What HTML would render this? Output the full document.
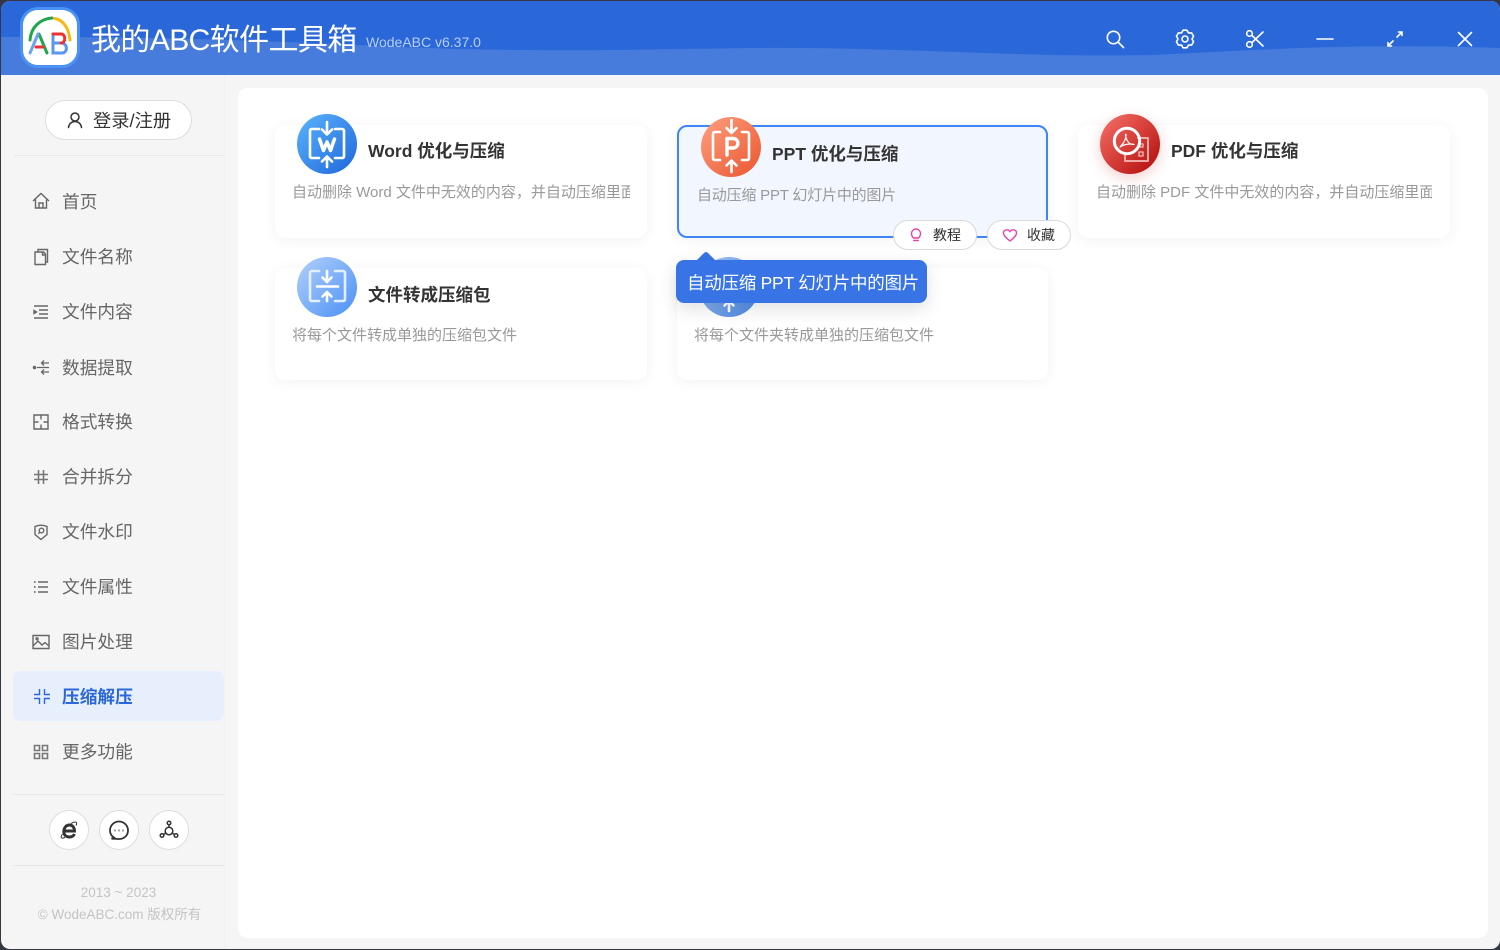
<!DOCTYPE html>
<html lang="zh-CN"><head><meta charset="utf-8"><title>我的ABC软件工具箱</title>
<style>
*{box-sizing:border-box}
html,body{margin:0;width:1500px;height:950px;overflow:hidden;background:#333844}
body{position:relative;font-family:"Liberation Sans","Noto Sans CJK SC",sans-serif}
.abs,.nav,.card,.ic,.t,.d{position:absolute}
#win{position:absolute;left:1px;top:1px;width:1499px;height:948px;border-radius:9px;background:#f5f5f5;overflow:hidden}
#bar{position:absolute;left:-1px;top:-1px;width:1500px;height:75px}
.nav{left:62px;font-size:17.7px;line-height:26px;height:26px;color:#666;white-space:nowrap}
.ni{position:absolute;left:32px;width:18px;height:18px;fill:none;stroke:#666;stroke-width:1.4}
.card{background:#fff;border-radius:10px;box-shadow:0 2px 14px rgba(0,0,0,.055)}
.t{font-size:17.5px;font-weight:700;color:#333;line-height:26px;white-space:nowrap}
.d{font-size:15px;color:#999;line-height:20px;white-space:nowrap;overflow:hidden}
.ic{width:60px;height:60px;border-radius:50%}
.ic svg{position:absolute;left:0;top:0;width:60px;height:60px;fill:none;stroke:#fff;stroke-width:2.6;stroke-linecap:round;stroke-linejoin:round}
.tb{position:absolute;top:28px;width:20px;height:20px;fill:none;stroke:#fff;stroke-width:1.6;stroke-linecap:round;stroke-linejoin:round}
.hr{position:absolute;left:13px;width:211px;height:1px;background:#e8e8e8}
.cb{position:absolute;top:810px;width:40px;height:40px;border-radius:50%;background:#fff;border:1px solid #ddd}
.cb svg{position:absolute;left:9px;top:9px;width:20px;height:20px;fill:none;stroke:#333;stroke-width:1.8}
.pill{position:absolute;top:220px;height:30px;width:84px;border-radius:15px;background:#fff;border:1px solid #d9d9d9;font-size:14px;line-height:29px;color:#333}
.pill svg{position:absolute;left:14px;top:6px;width:16px;height:16px;fill:none;stroke:#ee3fa5;stroke-width:1.4;stroke-linecap:round;stroke-linejoin:round}
.pill span{position:absolute;left:39px;top:0;white-space:nowrap}
</style></head><body>
<div id="win">
<svg id="bar" viewBox="0 0 1500 75"><rect width="1500" height="75" fill="#2a67d8"/><path d="M0 37C120 36 260 40 400 47C560 53 640 49 760 48C900 47 1030 58 1150 55C1260 50 1350 43 1500 48V75H0Z" fill="#477cdc"/></svg>

<div class="abs" style="left:19px;top:6px;width:60px;height:61px;border-radius:18px;background:#fff;border:3px solid #4a92f5"></div>
<svg class="abs" style="left:19px;top:6px;width:60px;height:61px" viewBox="0 0 60 61" fill="none" stroke-linecap="round" stroke-width="3">
<path d="M10 33C11 20 20 12 32 11" stroke="#1fa64b"/><path d="M35 11.5C43 13 49 21 50 33" stroke="#f7b90f"/>
<path d="M19 27L27 46" stroke="#1fa64b"/><path d="M10 46L18 27" stroke="#6aa3f2"/><path d="M16 40H23" stroke="#ef3030"/><path d="M33 27V46H42C48 46 48 36 41 36H33" stroke="#5a97ef"/><path d="M33 27H41C46 27 46 36 41 36" stroke="#ef3030"/>
</svg>
<div class="abs" style="left:90px;top:19px;font-size:30px;line-height:42px;color:#fff;white-space:nowrap;letter-spacing:-.6px">我的ABC软件工具箱</div>
<div class="abs" style="left:365px;top:30px;font-size:14px;line-height:22px;color:#b9cdf2;white-space:nowrap">WodeABC v6.37.0</div>

<svg class="tb" style="left:1104px" viewBox="0 0 20 20"><circle cx="8.5" cy="8.5" r="6.2"/><path d="M13 13L18.5 18.5"/></svg>
<svg class="tb" style="left:1174px" viewBox="0 0 20 20"><path d="M8.13 1.2H11.87L13.5 3.94L16.69 3.98L18.56 7.22L17 10L18.56 12.78L16.69 16.02L13.5 16.06L11.87 18.8H8.13L6.5 16.06L3.31 16.02L1.44 12.78L3 10L1.44 7.22L3.31 3.98L6.5 3.94Z"/><circle cx="10" cy="10" r="3"/></svg>
<svg class="tb" style="left:1244px" viewBox="0 0 20 20"><circle cx="4.5" cy="4.5" r="2.8"/><circle cx="4.5" cy="15.5" r="2.8"/><path d="M7 6.5L18 17M7 13.5L18 3"/></svg>
<svg class="tb" style="left:1314px" viewBox="0 0 20 20"><path d="M2 10H18"/></svg>
<svg class="tb" style="left:1384px" viewBox="0 0 20 20"><path d="M3 17L8 12M12 8L17 3M13.5 3H17V6.500M3 13.500V17H6.500"/></svg>
<svg class="tb" style="left:1454px" viewBox="0 0 20 20"><path d="M3.500 3.500L16.500 16.500M16.500 3.500L3.500 16.500"/></svg>

<div class="abs" style="left:44px;top:99px;width:147px;height:40px;border-radius:20px;background:#fff;border:1px solid #ddd"></div>
<svg class="abs" style="left:65px;top:110px;width:18px;height:18px;fill:none;stroke:#333;stroke-width:1.5;stroke-linecap:round" viewBox="0 0 18 18"><circle cx="9" cy="6" r="4"/><path d="M2.500 16.500C3 12.500 6 10.500 9 10.500S15 12.500 15.500 16.500"/></svg>
<div class="abs" style="left:92px;top:107px;font-size:18.300px;line-height:26px;color:#333;white-space:nowrap">登录/注册</div>
<div class="hr" style="top:154px"></div>

<div class="abs" style="left:12px;top:670px;width:211px;height:50px;border-radius:8px;background:#e8effc"></div>
<div class="abs" style="left:223px;top:74px;width:1px;height:874px;background:#f1f1f1"></div>

<div class="abs" style="left:-1px;top:-1px;width:1500px;height:950px">
<svg class="ni" style="top:192px" viewBox="0 0 18 18"><path d="M1 9L9 1.500L17 9M3.500 7.500V16H14.500V7.500M7 16V11H11V16"/></svg>
<div class="nav" style="top:189px">首页</div>
<svg class="ni" style="top:248px" viewBox="0 0 18 18"><path d="M3 4H11.500L13.500 6V16.500H3ZM6 4V1.500H15.500V14H13.500M10.500 4V7H13.500"/></svg>
<div class="nav" style="top:244px">文件名称</div>
<svg class="ni" style="top:303px" viewBox="0 0 18 18"><path d="M2 3H16M7 7H16M7 11H16M2 15H16"/><path d="M2 7.500L4.500 9L2 10.500Z" fill="#666"/></svg>
<div class="nav" style="top:299px">文件内容</div>
<svg class="ni" style="top:358px" viewBox="0 0 18 18"><path d="M5 9.500H17M17 5H9.500M12 2.500L9.500 5L12 7.500M17 14H9.500M12 11.500L9.500 14L12 16.500" stroke-width="1.300"/><circle cx="2.500" cy="9.500" r="1.100" fill="#666"/></svg>
<div class="nav" style="top:355px">数据提取</div>
<svg class="ni" style="top:413px" viewBox="0 0 18 18"><path d="M2 2H16V16H2ZM2 9H6.500M11.500 9H16M9 2V6.500M9 11.500V16"/></svg>
<div class="nav" style="top:409px">格式转换</div>
<svg class="ni" style="top:468px;stroke-width:1.600;stroke:#777" viewBox="0 0 18 18"><path d="M6.500 2V16M11.500 2V16M2 6.500H16M2 11.500H16"/></svg>
<div class="nav" style="top:464px">合并拆分</div>
<svg class="ni" style="top:523px" viewBox="0 0 18 18"><path d="M3 3.500Q9 .8 15 3.500V11.500L9 16.500L3 11.500Z"/><circle cx="9.500" cy="7.500" r="2.300"/><path d="M7.800 9.300L6.300 10.800"/></svg>
<div class="nav" style="top:519px">文件水印</div>
<svg class="ni" style="top:578px" viewBox="0 0 18 18"><path d="M6 4H16M6 9H16M6 14H16"/><path d="M2 4H3.500M2 9H3.500M2 14H3.500" stroke-width="1.800"/></svg>
<div class="nav" style="top:574px">文件属性</div>
<svg class="ni" style="top:633px" viewBox="0 0 18 18"><path d="M1 2.500H17V15.500H1ZM1 13L6 8L10 12L13 9.500L17 13"/><circle cx="5" cy="5.800" r="1"/></svg>
<div class="nav" style="top:629px">图片处理</div>
<svg class="ni" style="top:687px;left:33px;stroke:#2a67d8;stroke-width:1.400" viewBox="0 0 18 18"><path d="M6.500 2V7.500H1M11.500 2V7.500H17M6.500 17V11.500H1M11.500 17V11.500H17"/></svg>
<div class="nav" style="top:684px;color:#2a67d8;font-weight:700">压缩解压</div>
<svg class="ni" style="top:743px;stroke-width:1.600;stroke:#777" viewBox="0 0 18 18"><path d="M2.500 2.500H7.500V7.500H2.500ZM10.500 2.500H15.500V7.500H10.500ZM2.500 10.500H7.500V15.500H2.500ZM10.500 10.500H15.500V15.500H10.500Z"/></svg>
<div class="nav" style="top:739px">更多功能</div>

<div class="hr" style="top:794px"></div>
<div class="cb" style="left:49px"><svg viewBox="0 0 20 20" style="stroke-width:2.900"><path d="M5 11H15.500C15.500 7 13 5 10.500 5C7 5 4.800 8 4.800 11.500C4.800 15 7 17 10.500 17C12.500 17 14.500 16 15.500 14"/><path d="M3.500 14C1 17.500 2 19 6 17.500M12 3.500C16 1 19 1.500 17 5.500" stroke-width="1"/></svg></div>
<div class="cb" style="left:99px"><svg viewBox="0 0 20 20"><path d="M5 17.500C2.500 16 1 13.500 1 10.500C1 5.500 5 1.500 10 1.500S19 5.500 19 10.500S15 19 10 19C8 19 6 18.700 2.500 18.700Z"/><path d="M5.500 10.500H6.500M9.500 10.500H10.500M13.500 10.500H14.500" stroke-width="1.800"/></svg></div>
<div class="cb" style="left:149px"><svg viewBox="0 0 20 20" style="stroke-width:1.500"><circle cx="10" cy="3" r="1.800"/><circle cx="3" cy="15.500" r="1.800"/><circle cx="17" cy="15.500" r="1.800"/><circle cx="10" cy="11" r="3.800"/><path d="M10 5V7.200M4.600 14.500L6.700 13M15.400 14.500L13.300 13"/></svg></div>
<div class="hr" style="top:865px"></div>
<div class="abs" style="left:13px;top:883px;width:211px;text-align:center;font-size:13.500px;line-height:20px;color:#c4c4c4">2013 ~ 2023</div>
<div class="abs" style="left:14px;top:905px;width:211px;text-align:center;font-size:13.500px;line-height:20px;color:#c4c4c4;white-space:nowrap">© WodeABC.com 版权所有</div>

<div class="abs" style="left:238px;top:88px;width:1250px;height:850px;background:#fff;border-radius:10px"></div>

<div class="card" style="left:275px;top:125px;width:372px;height:113px"></div>
<div class="card" style="left:677px;top:125px;width:371px;height:113px;background:#f2f6fe;border:2px solid #3f85f5"></div>
<div class="card" style="left:1078px;top:125px;width:372px;height:113px"></div>
<div class="card" style="left:275px;top:268px;width:372px;height:112px"></div>
<div class="card" style="left:677px;top:268px;width:371px;height:112px"></div>

<div class="ic" style="left:297px;top:114px;background:linear-gradient(135deg,#5ab4fb,#1f66dc)"><svg viewBox="0 0 60 60"><path d="M22 15H15Q13 15 13 17V42Q13 44 15 44H22M38 15H45Q47 15 47 17V42Q47 44 45 44H38M30 8V20M25 15.500L30 20.500L35 15.500M30 43V53M25 47.500L30 42.500L35 47.500"/><path d="M22.500 25L26.500 36.500L30 28L33.500 36.500L37.500 25" stroke-width="3.500"/></svg></div>
<div class="t" style="left:368px;top:138px">Word 优化与压缩</div>
<div class="d" style="left:292px;top:183px;width:338px">自动删除 Word 文件中无效的内容，并自动压缩里面的图片</div>

<div class="ic" style="left:701px;top:117px;background:linear-gradient(135deg,#ff9f80,#e9562e)"><svg viewBox="0 0 60 60"><path d="M19 15H14Q12 15 12 17V41Q12 43 14 43H19M41 15H46Q48 15 48 17V41Q48 43 46 43H41M30.500 3V15.500M25.500 11L30.500 16L35.500 11M30.500 44V55M25.500 48.500L30.500 43.500L35.500 48.500"/><path d="M26 38V21.500H32C38.500 21.500 38.500 31 32 31H26" stroke-width="3.400"/></svg></div>
<div class="t" style="left:772px;top:141px">PPT 优化与压缩</div>
<div class="d" style="left:697px;top:186px;width:330px;letter-spacing:-.2px">自动压缩 PPT 幻灯片中的图片</div>

<div class="ic" style="left:1100px;top:114px;background:linear-gradient(135deg,#f9716a,#b00a08);box-shadow:0 4px 14px rgba(200,40,30,.22)"><svg viewBox="0 0 60 60"><path d="M38 24H48V47H25V41" stroke="#efaaa6" stroke-width="2"/><path d="M39 38H43V42H39ZM40 30H43V33H40Z" stroke="#efaaa6" stroke-width="1.500"/><circle cx="27" cy="27" r="12.700" stroke-width="3"/><path d="M20 33C23 30 26 26 26 21C26 19 24.500 21 27 26C29 30 31 30.500 34 30.500C31 29.500 24 30 20 33Z" stroke-width="1.200"/></svg></div>
<div class="t" style="left:1171px;top:138px">PDF 优化与压缩</div>
<div class="d" style="left:1096px;top:183px;width:336px">自动删除 PDF 文件中无效的内容，并自动压缩里面的图片</div>

<div class="ic" style="left:297px;top:257px;background:linear-gradient(135deg,#b3d0fa,#4a90f6)"><svg viewBox="0 0 60 60"><path d="M22 14H15Q13 14 13 16V42Q13 44 15 44H22M38 14H46Q48 14 48 16V42Q48 44 46 44H38" stroke="#e4eefd"/><path d="M30 14V25M25.500 20.500L30 25L34.500 20.500M20 29.500H41M30 35V44M25.500 39.500L30 35L34.500 39.500"/></svg></div>
<div class="t" style="left:368px;top:282px">文件转成压缩包</div>
<div class="d" style="left:292px;top:326px;width:340px">将每个文件转成单独的压缩包文件</div>

<div class="ic" style="left:699px;top:257px;background:linear-gradient(135deg,#a9c9f8,#4a85e0)"><svg viewBox="0 0 60 60"><path d="M30 44V54M25.500 48.500L30 44L34.500 48.500"/></svg></div>
<div class="d" style="left:694px;top:326px;width:340px">将每个文件夹转成单独的压缩包文件</div>

<div class="pill" style="left:893px"><svg viewBox="0 0 16 16"><path d="M5.500 11C4 9.500 3.500 8.500 3.500 6.500C3.500 4 5.500 2 8 2S12.500 4 12.500 6.500C12.500 8.500 12 9.500 10.500 11ZM5.800 13.500H10.200"/></svg><span>教程</span></div>
<div class="pill" style="left:987px"><svg viewBox="0 0 16 16"><path d="M8 14C4 11 1.500 8.500 1.500 6C1.500 4 3 2.800 4.800 2.800C6 2.800 7.300 3.500 8 4.800C8.700 3.500 10 2.800 11.200 2.800C13 2.800 14.500 4 14.500 6C14.500 8.500 12 11 8 14Z"/></svg><span>收藏</span></div>

<svg class="abs" style="left:696px;top:251px;width:20px;height:10px" viewBox="0 0 20 10"><path d="M0 10L8 2Q10 0 12 2L20 10Z" fill="#3874e6"/></svg>
<div class="abs" style="left:676px;top:260px;width:251px;height:43px;border-radius:8px;background:#3874e6;color:#fff;font-size:17.500px;line-height:46px;padding-left:11px;letter-spacing:-.25px;white-space:nowrap;box-shadow:0 6px 18px rgba(0,0,0,.12)">自动压缩 PPT 幻灯片中的图片</div>
</div>
</div>
</body></html>
